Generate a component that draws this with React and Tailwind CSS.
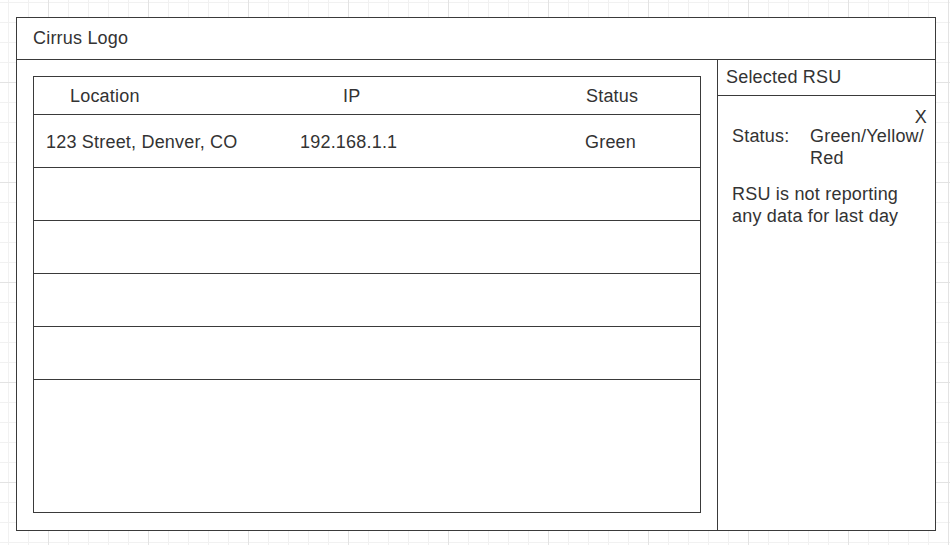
import React from "react";

const rows = [
  { location: "123 Street, Denver, CO", ip: "192.168.1.1", status: "Green" },
  null,
  null,
  null,
  null,
];

export default function App() {
  return (
    <div
      className="w-[950px] h-[545px] overflow-hidden pt-[17px] pl-[16px] bg-white text-[18px] leading-[22px] tracking-[0.2px] text-[#333333] font-['Liberation_Sans',Arial,sans-serif] bg-[image:linear-gradient(to_right,#e3e3e3_1px,transparent_1px),linear-gradient(to_bottom,#e3e3e3_1px,transparent_1px),linear-gradient(to_right,#f1f1f1_1px,transparent_1px),linear-gradient(to_bottom,#f1f1f1_1px,transparent_1px)] bg-[size:100px_100px,100px_100px,20px_20px,20px_20px] bg-[position:48px_0,0_82px,8px_0,0_2px]"
    >
      <div className="w-[920px] h-[514px] border border-[#3a3a3a] bg-white flex flex-col">
        {/* Header */}
        <header className="h-[42px] flex-none border-b border-[#3a3a3a] flex items-center pl-[16px] pb-[1px]">
          Cirrus Logo
        </header>

        <div className="flex flex-1 min-h-0">
          {/* Left: RSU table */}
          <section className="w-[701px] flex-none border-r border-[#3a3a3a] pt-[16px] pl-[16px]">
            <div className="w-[668px] h-[437px] border border-[#3a3a3a] flex flex-col">
              <div className="h-[38px] flex-none border-b border-[#3a3a3a] grid grid-cols-[309px_243px_1fr] items-center">
                <span className="pl-[36px]">Location</span>
                <span>IP</span>
                <span>Status</span>
              </div>
              {rows.map((row, i) => (
                <div
                  key={i}
                  className="h-[53px] flex-none border-b border-[#3a3a3a] grid grid-cols-[266px_285px_1fr] items-center pt-[2px]"
                >
                  <span className="pl-[12px]">{row?.location}</span>
                  <span>{row?.ip}</span>
                  <span>{row?.status}</span>
                </div>
              ))}
            </div>
          </section>

          {/* Right: selected RSU */}
          <aside className="flex-1 flex flex-col">
            <div className="h-[36px] flex-none border-b border-[#3a3a3a] flex items-center pl-[8px] pb-[1px]">
              Selected RSU
            </div>
            <div className="pt-[10px]">
              <div className="flex justify-end pr-[8px]">
                <span>X</span>
              </div>
              <div className="flex pl-[14px] -mt-[3px]">
                <span className="w-[78px] flex-none">Status:</span>
                <span className="w-[120px]">Green/Yellow/ Red</span>
              </div>
              <p className="pl-[14px] mt-[14px] w-[200px]">
                RSU is not reporting any data for last day
              </p>
            </div>
          </aside>
        </div>
      </div>
    </div>
  );
}
